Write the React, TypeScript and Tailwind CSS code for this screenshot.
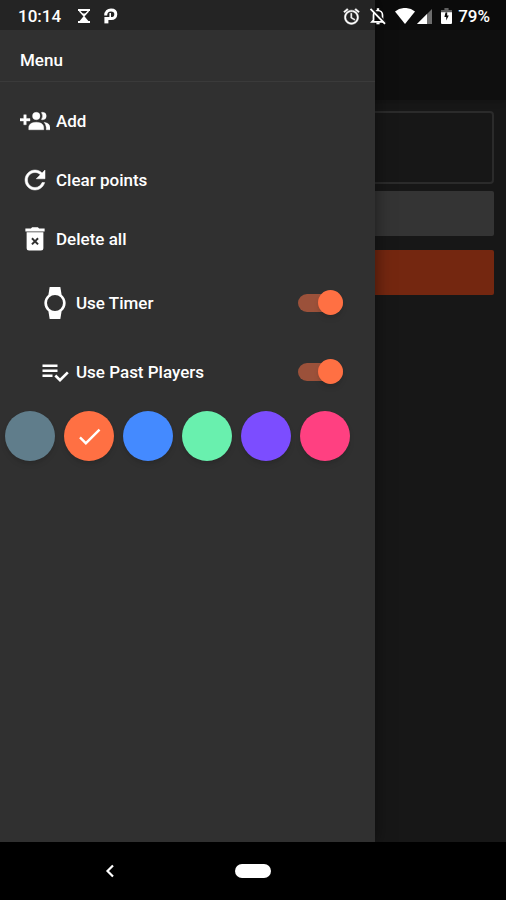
import { useState } from "react";
import type { ReactNode } from "react";

function Icon({ className, children }: { className: string; children: ReactNode }) {
  return (
    <svg viewBox="0 0 24 24" fill="currentColor" aria-hidden="true" className={`shrink-0 ${className}`}>
      {children}
    </svg>
  );
}

const AddPeople = () => (
  <Icon className="size-[30px] stroke-white [stroke-width:0.3]">
    <path d="M19 17V19H7V17S7 13 13 13 19 17 19 17M16 8A3 3 0 1 0 13 11A3 3 0 0 0 16 8M19.2 13.06A5.6 5.6 0 0 1 21 17V19H24V17S24 13.55 19.2 13.06M18 5A2.91 2.91 0 0 0 17.11 5.14A5 5 0 0 1 17.11 10.86A2.91 2.91 0 0 0 18 11A3 3 0 0 0 18 5M8 10H5V7H3V10H0V12H3V15H5V12H8Z" />
  </Icon>
);

const Refresh = () => (
  <Icon className="size-[30px] stroke-white [stroke-width:0.4]">
    <path d="M17.65 6.35C16.2 4.9 14.21 4 12 4c-4.42 0-7.99 3.58-7.99 8s3.57 8 7.99 8c3.73 0 6.84-2.55 7.73-6h-2.08c-.82 2.33-3.04 4-5.65 4-3.31 0-6-2.69-6-6s2.69-6 6-6c1.66 0 3.14.69 4.22 1.78L13 11h7V4l-2.35 2.35z" />
  </Icon>
);

const Trash = () => (
  <Icon className="size-[30px]">
    <path d="M4.3 3.6h4.4l1-1.1h4.6l1 1.1h4.4v2.3H4.3z" />
    <path
      fillRule="evenodd"
      d="M5.3 6.6h13.4v12.6a2 2 0 0 1-2 2H7.3a2 2 0 0 1-2-2zM10.1 10.8l-1.1 1.1 1.9 1.9-1.9 1.9 1.1 1.1 1.9-1.9 1.9 1.9 1.1-1.1-1.9-1.9 1.9-1.9-1.1-1.1-1.9 1.9z"
    />
  </Icon>
);

const Watch = () => (
  <Icon className="size-8">
    <path d="M6,12A6,6 0 0,1 12,6A6,6 0 0,1 18,12A6,6 0 0,1 12,18A6,6 0 0,1 6,12M20,12C20,9.45 18.81,7.19 16.95,5.73L16,0H8L7.05,5.73C5.19,7.19 4,9.45 4,12C4,14.54 5.19,16.81 7.05,18.27L8,24H16L16.95,18.27C18.81,16.81 20,14.54 20,12Z" />
  </Icon>
);

const PlaylistCheck = () => (
  <Icon className="size-[30px]">
    <path d="M14 10H2v2h12v-2zm0-4H2v2h12V6zM2 16h8v-2H2v2zm19.5-4.5L23 13l-6.99 7-4.51-4.5L13 14l3.01 3 5.49-5.5z" />
  </Icon>
);

function StatusBar() {
  return (
    <div className="absolute inset-x-0 top-0 flex h-[30px] items-center bg-black/25 pt-[2px] pr-4 pl-[18px] font-medium">
      <span>10:14</span>
      <svg viewBox="0 0 14 14" className="ml-4 size-[14px]" aria-hidden="true">
        <path d="M1 1h12M1 13h12" stroke="white" strokeWidth="2" />
        <path d="M2.5 2l4.5 5 4.5-5" fill="none" stroke="white" strokeWidth="1.5" />
        <path d="M4.5 4.5h5L7 7.2zM7 6.8l5 6H2z" fill="white" />
      </svg>
      <svg viewBox="0 0 14 16" className="ml-[13px] h-4 w-[14px]" fill="none" stroke="white" aria-hidden="true">
        <path d="M1.7 7.500C1.700 3.800 4 1.900 7 1.900c3 0 4.800 1.800 4.800 4.300S10 10.600 7.200 10.600H4" strokeWidth="3" />
        <path d="M6.200 5v6.500" strokeWidth="1.600" />
        <path d="M2.400 9v6.400" strokeWidth="4" />
      </svg>
      <div className="ml-auto flex items-center">
        <Icon className="size-[19px] stroke-white [stroke-width:0.5]">
          <path d="M22 5.72l-4.6-3.86-1.29 1.53 4.6 3.86L22 5.72zM7.88 3.39L6.6 1.86 2 5.71l1.29 1.53 4.59-3.85zM12.5 8H11v6l4.75 2.85.75-1.23-4-2.37V8zM12 4c-4.97 0-9 4.03-9 9s4.02 9 9 9c4.97 0 9-4.03 9-9s-4.03-9-9-9zm0 16c-3.87 0-7-3.13-7-7s3.13-7 7-7 7 3.13 7 7-3.13 7-7 7z" />
        </Icon>
        <svg viewBox="0 0 18 18" className="ml-2 size-[18px]" fill="none" stroke="white" aria-hidden="true">
          <path d="M4.5 13.2V8a4.5 4.5 0 0 1 9 0v5.2l1.5 1.6H3z" strokeWidth="1.7" />
          <path d="M9 1.2v2" strokeWidth="2.4" />
          <path d="M7.4 16.4h3.2" strokeWidth="1.8" />
          <path d="M3 1l14 15" stroke="#1a1a1a" strokeWidth="2" />
          <path d="M1.5 1.8l14.5 15" strokeWidth="1.8" />
        </svg>
        <svg viewBox="0 0 20 16" className="ml-2 h-4 w-5" fill="white" aria-hidden="true">
          <path d="M0 3.6a15.5 15.5 0 0 1 20 0L10 16z" />
        </svg>
        <svg viewBox="0 0 15 15" className="ml-[2px] size-[15px]" fill="white" aria-hidden="true">
          <path d="M15 0v15H0z" opacity=".4" />
          <path d="M10 5v10H0z" />
        </svg>
        <svg viewBox="0 0 11 16" className="ml-[9px] h-4 w-[11px]" aria-hidden="true">
          <path d="M3.4 0h4.2v2H11v3H0V2h3.4z" fill="white" opacity=".35" />
          <path fill="white" fillRule="evenodd" d="M0 4.2h4.6L3.4 9h1.8v3.5L7.8 7.5H6.2V4.2H11V15a1 1 0 0 1-1 1H1a1 1 0 0 1-1-1z" />
        </svg>
        <span className="ml-[6px]">79%</span>
      </div>
    </div>
  );
}

function Action({ icon, label }: { icon: ReactNode; label: string }) {
  return (
    <button type="button" className="flex h-[59px] w-full items-center gap-[6px] px-5 text-left">
      {icon}
      {label}
    </button>
  );
}

function Toggle({ id, icon, label }: { id: string; icon: ReactNode; label: string }) {
  const [on, setOn] = useState(true);
  return (
    <div className="flex h-[69px] items-center pr-8 pl-[39px]">
      <label htmlFor={id} className="flex flex-1 items-center gap-[5px]">
        <span className="flex w-8 justify-center">{icon}</span>
        {label}
      </label>
      <input
        id={id}
        type="checkbox"
        role="switch"
        checked={on}
        onChange={() => setOn(!on)}
        className="flex h-[18px] w-[45px] appearance-none items-center rounded-full bg-[#757575] before:size-[25px] before:rounded-full before:bg-[#bdbdbd] before:shadow-md before:content-[''] checked:justify-end checked:bg-[#9b513a] checked:before:bg-[#ff7043]"
      />
    </div>
  );
}

const swatches = [
  { name: "Blue grey", color: "bg-[#607d8b]" },
  { name: "Orange", color: "bg-[#ff7043]" },
  { name: "Blue", color: "bg-[#448aff]" },
  { name: "Green", color: "bg-[#69f0ae]" },
  { name: "Purple", color: "bg-[#7c4dff]" },
  { name: "Pink", color: "bg-[#ff4081]" },
];

function Swatches() {
  const [selected, setSelected] = useState("Orange");
  return (
    <div className="flex gap-[9px] px-[5px] pt-[5px]">
      {swatches.map(({ name, color }) => (
        <button
          key={name}
          type="button"
          aria-label={name}
          aria-pressed={selected === name}
          onClick={() => setSelected(name)}
          className={`flex size-[50px] items-center justify-center rounded-full shadow-md ${color}`}
        >
          {selected === name && (
            <Icon className="size-[29px]">
              <path d="M9 16.17L4.83 12l-1.42 1.41L9 19 21 7l-1.41-1.41z" />
            </Icon>
          )}
        </button>
      ))}
    </div>
  );
}

export default function App() {
  return (
    <div className="flex min-h-screen flex-col bg-black font-['Roboto',sans-serif] text-[17px] leading-5 font-medium text-white">
      <div className="relative flex flex-1 flex-col overflow-hidden bg-[#171717]">
        <div className="h-[100px] bg-[#0f0f0f] shadow-md" />
        <main className="flex flex-col px-3 pt-[11px]">
          <div className="h-[73px] rounded-sm border-2 border-[#2b2b2b]" />
          <div className="mt-[7px] h-[45px] rounded-xs bg-[#343434]" />
          <div className="mt-[14px] h-[45px] rounded-xs bg-[#742710]" />
        </main>

        <aside className="absolute inset-y-0 left-0 w-[375px] max-w-full bg-[#303030] pt-[30px] shadow-[0_0_16px_rgba(0,0,0,0.5)]">
          <h1 className="flex h-[52px] items-center border-b border-[#3a3a3a] px-5 pt-2">Menu</h1>
          <nav className="pt-[9px]">
            <Action icon={<AddPeople />} label="Add" />
            <Action icon={<Refresh />} label="Clear points" />
            <Action icon={<Trash />} label="Delete all" />
          </nav>
          <Toggle id="use-timer" icon={<Watch />} label="Use Timer" />
          <Toggle id="use-past-players" icon={<PlaylistCheck />} label="Use Past Players" />
          <Swatches />
        </aside>

        <StatusBar />
      </div>

      <footer className="grid h-[58px] grid-cols-[1fr_36px_1fr] items-center">
        <button type="button" aria-label="Back" className="justify-self-center pr-4">
          <svg viewBox="0 0 10 14" className="h-[14px] w-[10px]" fill="none" stroke="white" strokeWidth="2.2" aria-hidden="true">
            <path d="M8 1.5L2.5 7l5.5 5.5" />
          </svg>
        </button>
        <button type="button" aria-label="Home" className="h-[14px] w-9 rounded-full bg-white" />
      </footer>
    </div>
  );
}
